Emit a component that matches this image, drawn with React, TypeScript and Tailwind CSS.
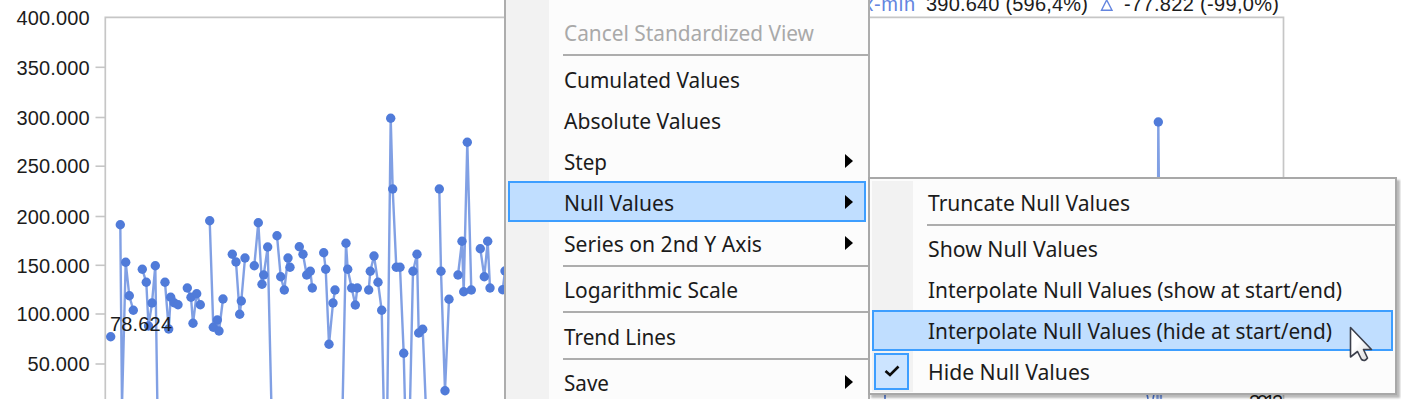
import React from 'react';
import clsx from 'clsx';

type Point = [number, number];

// Each run is a stretch of the series without gaps
const runs: Point[][] = [
  [[110.7, 336.7]],
  [[120.3, 224.7], [122, 405], [125.7, 262.3], [129.3, 295.7], [133.3, 310.3]],
  [[142.3, 269.3], [146.3, 282.3], [148.5, 326], [152, 303], [155.3, 265.7], [157.4, 405]],
  [[165, 282.3], [168.7, 329], [170.7, 297.3], [174, 302.7], [178, 304.7]],
  [[187.3, 288], [191, 297.3], [193, 323.3], [196.7, 293.7], [200.3, 304.7]],
  [[209.7, 220.7], [213.3, 327.3], [217.3, 320], [219, 331], [223, 299]],
  [[232.3, 254.3], [236, 262], [239.7, 314.3], [241.3, 301], [245, 258]],
  [[254.3, 265.7], [258.3, 222.7], [262, 284.3], [263.7, 275], [267.7, 247], [271.4, 405]],
  [[277, 235.7], [280.7, 276.7], [284.3, 290], [288, 258], [290, 267.3]],
  [[299.3, 246.7], [303, 254.3], [306.7, 275], [310.3, 271.3], [312.3, 288]],
  [[323.7, 252.7], [325.7, 269.3], [329, 344.3], [333, 303], [335, 290]],
  [[342.6, 405], [346, 243.3], [347.7, 269.3], [351.7, 288], [355.3, 305], [357.3, 288]],
  [[368.7, 290], [370.3, 271.3], [374, 256], [378, 282.3], [381.7, 310.3], [383.7, 405]],
  [[387.3, 405], [390.7, 118.3], [392.7, 189], [396.3, 267.3], [400, 267.3], [403.7, 353.3], [405, 405]],
  [[410, 405], [413, 271.3], [417, 254.3], [418.7, 333], [422.7, 329.3], [425.8, 405]],
  [[439.3, 189], [441, 271.3], [445, 390.7], [449, 299.3]],
  [[458, 275], [462, 241.3], [463.7, 291.7], [467.3, 142.3], [471.3, 290]],
  [[480.3, 248.7], [484.3, 276.7], [487.7, 241.3], [490, 288]],
  [[502.7, 289.7], [505, 271]],
  [[1157.5, 405], [1158.3, 122], [1161, 405]],
];

const ticks = [
  { label: '400.000', y: 18 },
  { label: '350.000', y: 67.3 },
  { label: '300.000', y: 117.5 },
  { label: '250.000', y: 166.2 },
  { label: '200.000', y: 216.5 },
  { label: '150.000', y: 265.3 },
  { label: '100.000', y: 314 },
  { label: '50.000', y: 364 },
];

function Chart() {
  return (
    <svg width="1401" height="399" viewBox="0 0 1401 399" className="block font-['Liberation_Sans',Arial,sans-serif] text-[20px]">
      <path d="M105.3 399V17.3H1283.5V399" fill="none" stroke="#c6c6c6" strokeWidth="1.7" />
      {ticks.map((tick) => (
        <g key={tick.label}>
          <path d={`M95.5 ${tick.y}H105`} stroke="#c6c6c6" strokeWidth={tick.y > 20 ? 1.6 : 0} />
          <text x="89.5" y={tick.y + 7.2} textAnchor="end" textLength={tick.y > 360 ? 62 : 73} fill="#1c1c1c">{tick.label}</text>
        </g>
      ))}
      {runs.map((run, i) => (
        <g key={i} fill="#507bd9">
          <polyline points={run.map((p) => p.join(',')).join(' ')} fill="none" stroke="#507bd9" strokeWidth="2.4" strokeOpacity="0.72" strokeLinejoin="bevel" />
          {run.filter((p) => p[1] < 399).map((p, j) => (
            <circle key={j} cx={p[0]} cy={p[1]} r="4.7" />
          ))}
        </g>
      ))}
      <text x="110" y="331" textLength="62" fill="#1c1c1c">78.624</text>
      {/* Statistics line above the plot */}
      <text x="834" y="11" textLength="81" fill="#6485df">max-min</text>
      <text x="926" y="11" fill="#1c1c1c" textLength="162">390.640 (596,4%)</text>
      <path d="M1101.5 10.3H1112L1106.7 0Z" fill="none" stroke="#6485df" strokeWidth="1.4" />
      <text x="1124" y="11" fill="#1c1c1c" textLength="155">-77.822 (-99,0%)</text>
      {/* Bits of the x axis peeking out below the submenu */}
      <path d="M885 394V399M1147 394L1148 399M1154 394L1153 399" stroke="#507bd9" strokeWidth="1.6" />
      <text x="1249" y="409" fill="#1c1c1c" textLength="34">2012</text>
    </svg>
  );
}

interface ItemProps {
  label: string;
  width: string;
  arrow?: boolean;
  active?: boolean;
  disabled?: boolean;
  checked?: boolean;
}

function Item({ label, width, arrow, active, disabled, checked }: ItemProps) {
  return (
    <div
      className={clsx(
        'flex h-[41px] shrink-0 items-center border-2 pr-[11px]',
        active ? 'border-[#3d9eff] bg-[#c0deff]' : 'border-transparent',
        disabled ? 'text-[#a9a9a9]' : 'text-[#1b1b1b]'
      )}
    >
      <div className="flex w-[53.5px] shrink-0">
        {checked && (
          <div className="flex h-[37px] w-[35px] items-center justify-center border-2 border-[#3d9eff] bg-[#cce4ff]">
            <svg width="16" height="12" viewBox="0 0 16 12">
              <path d="M1.5 6L6 10L14.5 1.5" fill="none" stroke="#0c0c0c" strokeWidth="2.6" />
            </svg>
          </div>
        )}
      </div>
      <svg height="36" className={clsx('block overflow-visible', width)}>
        <text x="0" y="26.5" textLength="100%" lengthAdjust="spacingAndGlyphs" fill="currentColor">{label}</text>
      </svg>
      {arrow && (
        <svg width="8" height="14" viewBox="0 0 8 14" className="ml-auto">
          <path d="M0 0L8 7L0 14Z" fill="#000" />
        </svg>
      )}
    </div>
  );
}

function Separator() {
  return (
    <div className="h-[5.5px] shrink-0 pt-[1.5px] pl-[55px] -mr-[3px]">
      <div className="h-[2px] bg-[#adadad]" />
    </div>
  );
}

const menuText = "font-['Noto_Sans','Open_Sans',sans-serif] text-[22px]";

function ContextMenu() {
  return (
    <div className={clsx('absolute top-0 left-[504px] flex h-[399px] w-[366px] flex-col overflow-hidden border-x-2 border-[#adadad] bg-[linear-gradient(90deg,#f2f2f2_43px,#fcfcfc_43px)] pt-[11.5px] pr-[2px] pl-[2px]', menuText)}>
      <Item label="Cancel Standardized View" width="w-[250px]" disabled />
      <Separator />
      <Item label="Cumulated Values" width="w-[176px]" />
      <Item label="Absolute Values" width="w-[157px]" />
      <Item label="Step" width="w-[43px]" arrow />
      <Item label="Null Values" width="w-[110px]" arrow active />
      <Item label="Series on 2nd Y Axis" width="w-[198px]" arrow />
      <Separator />
      <Item label="Logarithmic Scale" width="w-[174px]" />
      <Separator />
      <Item label="Trend Lines" width="w-[112px]" />
      <Separator />
      <Item label="Save" width="w-[45px]" arrow />
    </div>
  );
}

function Submenu() {
  return (
    <div className={clsx('absolute top-[177px] left-[868px] h-[218px] w-[529px] border-2 border-[#a8a8a8] bg-[#fcfcfc] p-[2px] shadow-[3px_3px_2px_#00000045]', menuText)}>
      <div className="bg-[linear-gradient(90deg,#f2f2f2_41px,transparent_41px)]">
        <Item label="Truncate Null Values" width="w-[202px]" />
        <Separator />
        <Item label="Show Null Values" width="w-[170px]" />
        <Item label="Interpolate Null Values (show at start/end)" width="w-[414px]" />
        <Item label="Interpolate Null Values (hide at start/end)" width="w-[404px]" active />
        <Item label="Hide Null Values" width="w-[162px]" checked />
      </div>
    </div>
  );
}

function Cursor() {
  return (
    <svg width="26" height="38" viewBox="0 0 26 38" className="absolute top-[325px] left-[1348px]">
      <defs>
        <linearGradient id="pointer" x1="0" y1="0" x2="1" y2="1">
          <stop offset="0.4" stopColor="#fff" />
          <stop offset="1" stopColor="#d4d4d4" />
        </linearGradient>
      </defs>
      <path d="M2.5 2.5V32L9.5 26.5L13.5 34.5Q17 37 19.5 33L15.5 24.5H23.5Z" fill="url(#pointer)" stroke="#3b3f4b" strokeWidth="1.6" strokeLinejoin="round" />
    </svg>
  );
}

export default function App() {
  return (
    <div className="relative h-[400px] w-[1401px] overflow-hidden bg-white">
      <Chart />
      <ContextMenu />
      <Submenu />
      <Cursor />
    </div>
  );
}
